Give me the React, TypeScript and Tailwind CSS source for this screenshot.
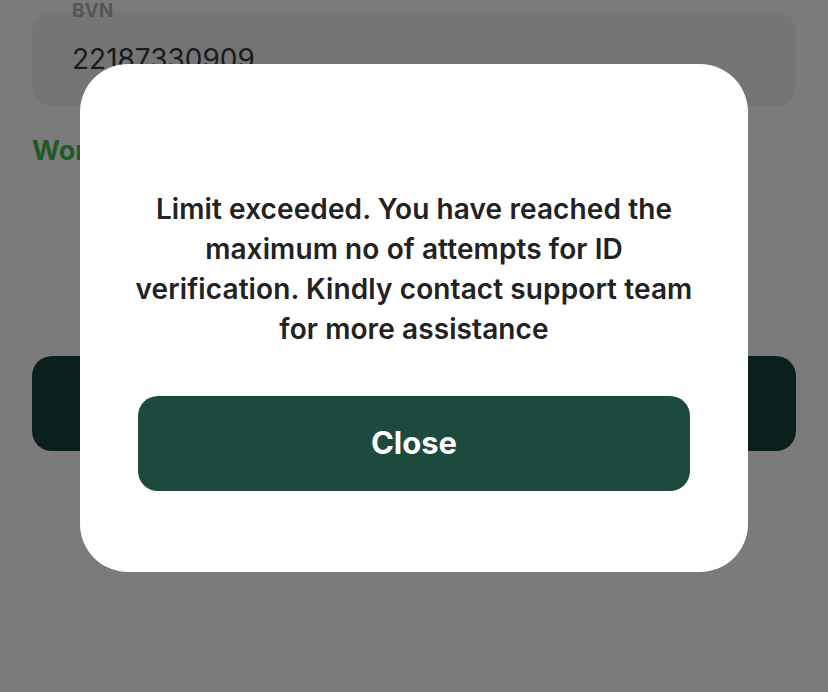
const LimitModal = () => {
  return (
    <div className="absolute left-[80px] top-[64px] flex h-[508px] w-[668px] flex-col items-center rounded-[48px] bg-white px-[44px] pt-[125px]">
      <p className="text-center text-[28px] font-semibold leading-[40px] tracking-[0.1px] text-[#222222]">
        Limit exceeded. You have reached the
        <br />
        maximum no of attempts for ID
        <br />
        verification. Kindly contact support team
        <br />
        for more assistance
      </p>
      <button className="mt-[47px] flex h-[95px] w-[552px] items-center justify-center rounded-[20px] bg-[#1c4a3e] text-[31px] font-bold text-white">
        Close
      </button>
    </div>
  );
};

const App = () => {
  return (
    <div
      className="relative h-[692px] w-[828px] overflow-hidden bg-[#7b7b7b]"
      style={{ fontFamily: "Inter, 'Noto Sans', sans-serif" }}
    >
      <div className="px-8">
        <div className="mt-3 flex h-[94px] flex-col rounded-[20px] bg-[#757578] px-10">
          <div className="-mt-[12px] text-[19px] font-bold leading-[22px] text-[#555557]">BVN</div>
          <div className="mt-[21px] text-[28px] leading-[32px] text-[#1a1a1a]">22187330909</div>
        </div>

        <p className="mt-[29px] text-[27px] font-bold leading-[32px] text-[#1f5a28]">Working on it</p>

        <button className="mt-[189px] h-[95px] w-full rounded-[20px] bg-[#0b201c]" />
      </div>

      <LimitModal />
    </div>
  );
};

export default App;
